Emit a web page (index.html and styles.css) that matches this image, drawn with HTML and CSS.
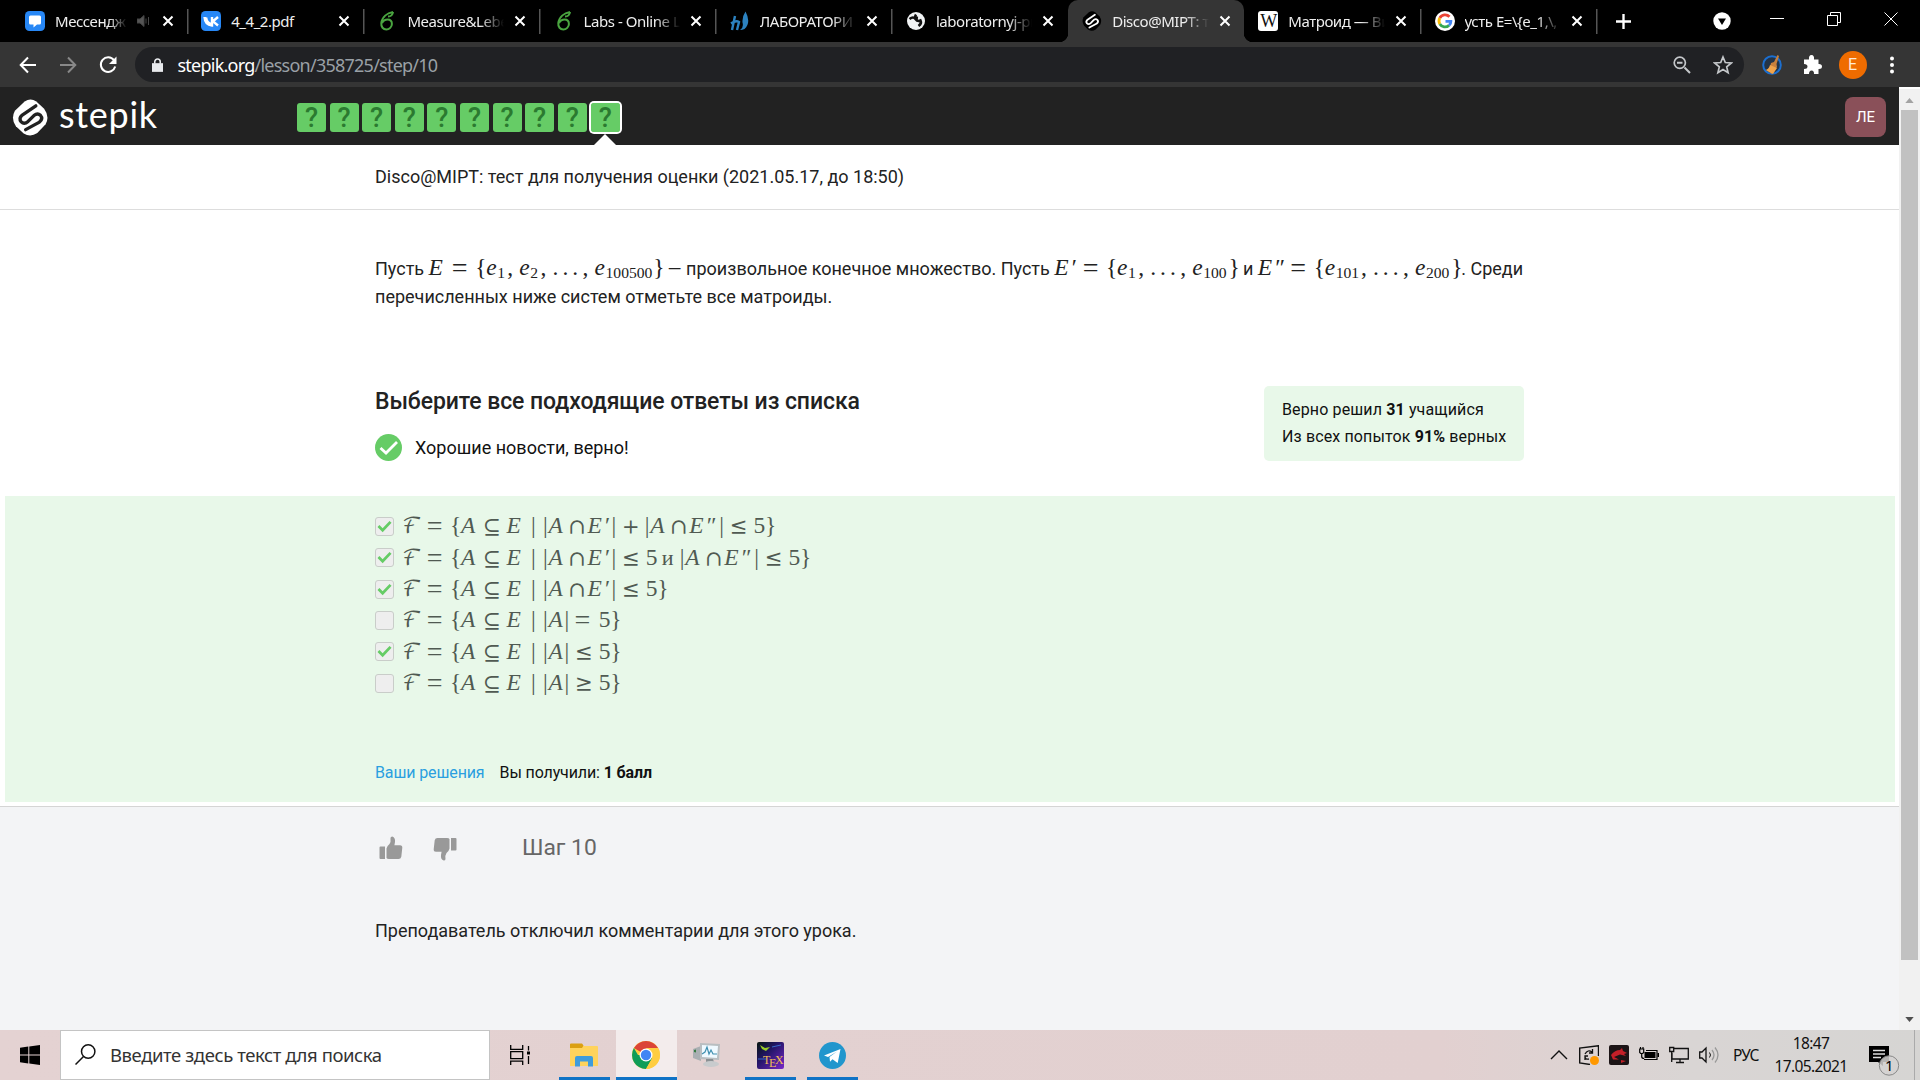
FILE: index.html
```html
<!DOCTYPE html>
<html lang="ru">
<head>
<meta charset="utf-8">
<title>Disco@MIPT</title>
<link rel="stylesheet" href="styles.css">
</head>
<body>
<svg class="defs" width="0" height="0">
  <defs>
    <symbol id="close" viewBox="0 0 12 12"><path d="M1.5 1.5l9 9M10.500 1.500l-9 9" stroke="#fff" stroke-width="2" fill="none"/></symbol>
    <symbol id="leaf" viewBox="0 0 16 20"><path d="M14 1C8 2 3 6 2.300 12c-.4 4 2 6.500 5 6.500s5.600-2.500 5.600-5.500c0-2.700-1.800-4.500-4.300-4.500C6 8.500 4 10 3 12M14 1c-.3 2.500-2 4.500-5 4.500" stroke="#4aa540" stroke-width="2" fill="none"/></symbol>
    <symbol id="hex" viewBox="0 0 38 38"><path d="M13 2.500Q19-1.500 25 2.500L33 10Q39 18 34.500 26L26 35Q19 39.500 12 35.500L4 28Q-1.500 20 3 12z"/></symbol>
    <symbol id="ess" viewBox="0 0 38 38"><path d="M24.500 7L10.500 16.500q-4 3.500-1 7 3 3 7-.5l6-6q3.700-3.200 6.700-.3 3 3.500-1 7L14 31.500" fill="none" stroke-width="3.400" stroke-linecap="round" stroke-linejoin="round"/></symbol>
    <symbol id="thumb" viewBox="0 0 24 24"><path d="M.5 11.500q0-1 1-1H6v12.500H1.500q-1 0-1-1zM7.500 12.500Q8 10 10.500 8 12 6 11.500 2q0-1.500 1.800-1.500Q16.500 1.500 16 6l-.6 3.200H21q2.500 0 2.300 2.500l-1 9Q21.800 23 19.500 23H10q-2 0-2.500-1z" fill="#999"/></symbol>
    <symbol id="tick" viewBox="0 0 16 14"><path d="M1.500 6.500l4.500 4.500L14.500 2" stroke="#66cc66" stroke-width="3" fill="none"/></symbol>
  </defs>
</svg>

<header class="tabs">
  <div class="tab"><svg class="fav" viewBox="0 0 20 20"><rect width="20" height="20" rx="4.500" fill="#2787f5"/><path d="M5.500 4.500h9q1.500 0 1.500 1.500v6q0 1.500-1.500 1.500H12l-3.500 3v-3h-3Q4 13.500 4 12V6q0-1.500 1.500-1.500z" fill="#fff"/></svg><span class="tab-title short">Мессендж</span><svg class="snd" viewBox="0 0 12 12"><path d="M0 4h3l4-3.500v11L3 8H0zM9 3.500v5M11.500 2v8" fill="#555" stroke="#444"/></svg><svg class="x"><use href="#close"/></svg></div>
  <div class="tab sep"><svg class="fav" viewBox="0 0 20 20"><rect width="20" height="20" rx="4.500" fill="#2787f5"/><path d="M3.500 6q.5 8 7.500 8.500V6M5 6.500q1 6 6 7M17 6l-5 4.300 5 4.200" fill="none" stroke="#fff" stroke-width="2.400"/></svg><span class="tab-title plain">4_4_2.pdf</span><svg class="x"><use href="#close"/></svg></div>
  <div class="tab sep"><svg class="fav narrow"><use href="#leaf"/></svg><span class="tab-title">Measure&amp;Lebe</span><svg class="x"><use href="#close"/></svg></div>
  <div class="tab sep"><svg class="fav narrow"><use href="#leaf"/></svg><span class="tab-title">Labs - Online L</span><svg class="x"><use href="#close"/></svg></div>
  <div class="tab sep"><svg class="fav" viewBox="0 0 20 20"><path d="M5 5L2 19M1 12.500q5-3.500 8-1.500l-2 8" stroke="#2c82c0" stroke-width="2.400" fill="none"/><path d="M15.500.5q6 11-1 17.500-2 1-4.500 1 4-2.500 2.500-7.500-.5-6 3-11z" fill="#2c82c0"/></svg><span class="tab-title">ЛАБОРАТОРИ</span><svg class="x"><use href="#close"/></svg></div>
  <div class="tab sep"><svg class="fav" viewBox="0 0 20 20"><circle cx="10" cy="10" r="9" fill="#f1f3f4"/><path d="M3.500 8q4-3 6 0t5 1.500q1.500 3-2 5.500M10 3.500q-2 3 2 3.500" stroke="#111" stroke-width="2.600" fill="none"/></svg><span class="tab-title">laboratornyj-pr</span><svg class="x"><use href="#close"/></svg></div>
  <div class="tab active"><svg class="fav" viewBox="0 0 38 38"><use href="#hex" fill="#000"/><use href="#ess" stroke="#fff"/></svg><span class="tab-title">Disco@MIPT: т</span><svg class="x"><use href="#close"/></svg></div>
  <div class="tab"><span class="fav wiki">W</span><span class="tab-title">Матроид — Ви</span><svg class="x"><use href="#close"/></svg></div>
  <div class="tab sep"><svg class="fav" viewBox="0 0 20 20"><circle cx="10" cy="10" r="10" fill="#fff"/><g fill="none" stroke-width="2.800"><path d="M4.800 7A6 6 0 0 1 14.500 5.800" stroke="#ea4335"/><path d="M4.800 13a6.200 6.200 0 0 1 0-6" stroke="#fbbc05"/><path d="M4.800 13a6 6 0 0 0 9.200 1.400" stroke="#34a853"/><path d="M14 14.400q2-1.800 1.900-4H10.500" stroke="#4285f4"/></g></svg><span class="tab-title">усть E=\{e_1,\,</span><svg class="x"><use href="#close"/></svg></div>
  <div class="newtab"><svg viewBox="0 0 14 14" width="15" height="15"><path d="M7 0v14M0 7h14" stroke="#fff" stroke-width="2.200"/></svg></div>
  <div class="winbtns">
    <svg viewBox="0 0 18 18" width="18" height="18"><circle cx="9" cy="9" r="8.700" fill="#fff"/><path d="M5 6.500h8L9 13z" fill="#000"/></svg>
    <svg viewBox="0 0 14 14" width="14" height="14"><path d="M0 6.500h14" stroke="#fff"/></svg>
    <svg viewBox="0 0 14 14" width="14" height="14"><path d="M.5 3.500h10v10H.5zM3.500 3.500v-3h10v10h-3" stroke="#fff" fill="none"/></svg>
    <svg viewBox="0 0 14 14" width="14" height="14"><path d="M.5.500l13 13M13.500.500l-13 13" stroke="#fff"/></svg>
  </div>
</header>

<nav class="toolbar">
  <svg class="nav-ic" viewBox="0 0 18 18"><path d="M17 9H2M9 1.500L1.700 9 9 16.500" stroke="#fff" stroke-width="2" fill="none"/></svg>
  <svg class="nav-ic" viewBox="0 0 18 18"><path d="M1 9h15M9 1.500L16.300 9 9 16.500" stroke="#888" stroke-width="2" fill="none"/></svg>
  <svg class="nav-ic" viewBox="0 0 18 18"><path d="M15 4.200A7.300 7.300 0 1 0 16.200 10.500" stroke="#fff" stroke-width="2" fill="none"/><path d="M17.500.5v7.500H10z" fill="#fff"/></svg>
  <div class="omnibox">
    <svg viewBox="0 0 12 15" width="11" height="14"><path d="M0 5.500h12V15H0z" fill="#e8eaed"/><path d="M3 6V4a3 3 0 0 1 6 0v2" stroke="#e8eaed" stroke-width="1.700" fill="none"/></svg>
    <span class="url"><b>stepik.org</b>/lesson/358725/step/10</span>
    <svg viewBox="0 0 18 18" width="18" height="18"><path d="M11.500 11.500L17 17M4 6.700h5.500" stroke="#c4c7ca" stroke-width="2"/><circle cx="6.800" cy="6.800" r="5.600" stroke="#c4c7ca" stroke-width="1.700" fill="none"/></svg>
    <svg viewBox="0 0 20 20" width="20" height="20"><path d="M10 2l2.300 5.500 6 .5-4.600 3.900 1.400 5.900L10 14.600l-5.100 3.200 1.400-5.900L1.700 8l6-.5z" stroke="#c4c7ca" stroke-width="1.700" fill="none"/></svg>
  </div>
  <div class="ext">
    <svg viewBox="0 0 20 20" width="20" height="20"><circle cx="10" cy="10" r="8.800" stroke="#1c6fd0" stroke-width="2" fill="#243447"/><path d="M15.500 0l1.500 1-2.500 8 .5 3-5 7-6-4q4-1 5-7l3-1z" fill="#c8803c"/><path d="M8 10l7 3-4 6-7-4q3-1 4-5z" fill="#f0a44c"/></svg>
    <svg viewBox="0 0 19 19" width="19" height="19"><path d="M1 4.500h5Q5.500 0 8.500 0T11 4.500h4.500V9Q19 8.800 19 11.500T15.500 14v5H11q.2-3.500-2.400-3.500T6 19H1v-5q3.500 0 3.500-2.500T1 9z" fill="#fff"/></svg>
    <span class="profile">E</span>
    <svg viewBox="0 0 4 18" width="4" height="18"><g fill="#fff"><circle cx="2" cy="2.500" r="2"/><circle cx="2" cy="9" r="2"/><circle cx="2" cy="15.500" r="2"/></g></svg>
  </div>
</nav>

<div class="viewport">
<main class="page">
  <header class="top">
    <svg class="logo" viewBox="0 0 38 38"><use href="#hex" fill="#fff"/><use href="#ess" stroke="#222"/></svg>
    <span class="brand">stepik</span>
    <div class="steps">
      <span>?</span><span>?</span><span>?</span><span>?</span><span>?</span><span>?</span><span>?</span><span>?</span><span>?</span><span class="current">?</span>
    </div>
    <span class="user">ЛЕ</span>
  </header>
  <div class="lesson">Disco@MIPT: тест для получения оценки (2021.05.17, до 18:50)</div>

  <section class="question">
    <p>Пусть <span class="m"><i class="E">E</i><b class="eq">=</b><b class="br">{</b><i class="e">e</i><sub class="s1">1</sub><b class="cm">,</b><i class="e">e</i><sub class="s1">2</sub><b class="cm">,</b><b class="dots">...</b><b class="cm">,</b><i class="e">e</i><sub class="s6">100500</sub><b class="end">}</b></span> — произвольное конечное множество. Пусть <span class="m"><i class="Ep">E</i><b class="pr">′</b><b class="eq">=</b><b class="br">{</b><i class="e">e</i><sub class="s1">1</sub><b class="cm">,</b><b class="dots">...</b><b class="cm">,</b><i class="e">e</i><sub class="s3">100</sub><b class="end">}</b></span> и <span class="m"><i class="Ep">E</i><b class="pr2">″</b><b class="eq">=</b><b class="br">{</b><i class="e">e</i><sub class="s3">101</sub><b class="cm">,</b><b class="dots">...</b><b class="cm">,</b><i class="e">e</i><sub class="s3">200</sub><b class="end">}</b></span>. Среди<br>перечисленных ниже систем отметьте все матроиды.</p>
  </section>

  <section class="quiz-head">
    <div>
      <h2>Выберите все подходящие ответы из списка</h2>
      <div class="verdict"><svg viewBox="0 0 27 27" width="27" height="27"><circle cx="13.500" cy="13.500" r="13.500" fill="#66cc66"/><path d="M5.500 14l5.500 5L22 8" stroke="#fff" stroke-width="2.800" fill="none"/></svg><span>Хорошие новости, верно!</span></div>
    </div>
    <div class="stats"><div>Верно решил <b>31</b> учащийся</div><div>Из всех попыток <b>91%</b> верных</div></div>
  </section>

  <section class="answers">
    <div class="opt"><span class="box"><svg><use href="#tick"/></svg></span><span class="m"><b class="F">ℱ</b><b class="eq">=</b><b class="br">{</b><i class="A1">A</i><b class="op sub">⊆</b><i class="E">E</i><b class="bar mid">|</b><b class="bar">|</b><i class="A">A</i><b class="op cap">∩</b><i class="Ep">E</i><b class="p1">′</b><b class="bar r">|</b><b class="op plus">+</b><b class="bar">|</b><i class="A">A</i><b class="op cap">∩</b><i class="Ep">E</i><b class="p2">″</b><b class="bar r">|</b><b class="op rel">≤</b><b class="n">5</b><b class="end">}</b></span></div>
    <div class="opt"><span class="box"><svg><use href="#tick"/></svg></span><span class="m"><b class="F">ℱ</b><b class="eq">=</b><b class="br">{</b><i class="A1">A</i><b class="op sub">⊆</b><i class="E">E</i><b class="bar mid">|</b><b class="bar">|</b><i class="A">A</i><b class="op cap">∩</b><i class="Ep">E</i><b class="p1">′</b><b class="bar r">|</b><b class="op rel">≤</b><b class="n and">5</b><b class="i">и</b><b class="bar">|</b><i class="A">A</i><b class="op cap">∩</b><i class="Ep">E</i><b class="p2">″</b><b class="bar r">|</b><b class="op rel">≤</b><b class="n">5</b><b class="end">}</b></span></div>
    <div class="opt"><span class="box"><svg><use href="#tick"/></svg></span><span class="m"><b class="F">ℱ</b><b class="eq">=</b><b class="br">{</b><i class="A1">A</i><b class="op sub">⊆</b><i class="E">E</i><b class="bar mid">|</b><b class="bar">|</b><i class="A">A</i><b class="op cap">∩</b><i class="Ep">E</i><b class="p1">′</b><b class="bar r">|</b><b class="op rel">≤</b><b class="n">5</b><b class="end">}</b></span></div>
    <div class="opt"><span class="box"></span><span class="m"><b class="F">ℱ</b><b class="eq">=</b><b class="br">{</b><i class="A1">A</i><b class="op sub">⊆</b><i class="E">E</i><b class="bar mid">|</b><b class="bar">|</b><i class="Al">A</i><b class="bar r">|</b><b class="eq">=</b><b class="n">5</b><b class="end">}</b></span></div>
    <div class="opt"><span class="box"><svg><use href="#tick"/></svg></span><span class="m"><b class="F">ℱ</b><b class="eq">=</b><b class="br">{</b><i class="A1">A</i><b class="op sub">⊆</b><i class="E">E</i><b class="bar mid">|</b><b class="bar">|</b><i class="Al">A</i><b class="bar r">|</b><b class="op rel">≤</b><b class="n">5</b><b class="end">}</b></span></div>
    <div class="opt"><span class="box"></span><span class="m"><b class="F">ℱ</b><b class="eq">=</b><b class="br">{</b><i class="A1">A</i><b class="op sub">⊆</b><i class="E">E</i><b class="bar mid">|</b><b class="bar">|</b><i class="Al">A</i><b class="bar r">|</b><b class="op rel">≥</b><b class="n">5</b><b class="end">}</b></span></div>
    <div class="score"><a>Ваши решения</a><span>Вы получили: <b>1 балл</b></span></div>
  </section>

  <footer class="foot">
    <div class="vote"><svg><use href="#thumb"/></svg><svg class="down"><use href="#thumb"/></svg><span>Шаг 10</span></div>
    <p>Преподаватель отключил комментарии для этого урока.</p>
  </footer>
</main>
<aside class="scroll">
  <svg viewBox="0 0 10 6" width="9" height="5"><path d="M0 6l5-6 5 6z" fill="#a3a3a3"/></svg>
  <div class="thumb"></div>
  <svg viewBox="0 0 10 6" width="9" height="5"><path d="M0 0l5 6 5-6z" fill="#505050"/></svg>
</aside>
</div>

<div class="taskbar">
  <div class="start"><svg viewBox="0 0 20 20" width="20" height="20"><path d="M0 2.700L8.300 1.600V9.500H0zM9.300 1.400L20 0v9.500H9.300zM0 10.500h8.300v7.900L0 17.300zM9.300 10.500H20V20L9.300 18.600z"/></svg></div>
  <div class="search"><svg viewBox="0 0 21 21" width="21" height="21"><circle cx="13.200" cy="7.500" r="6.700" stroke="#111" stroke-width="1.500" fill="none"/><path d="M8.500 12.500L.5 20.500" stroke="#111" stroke-width="1.500"/></svg><span>Введите здесь текст для поиска</span></div>
  <div class="app tv"><svg viewBox="0 0 20 20" width="20" height="20"><path d="M.7 0v4.300h12V0M.7 6.700h12v7H.7zM.7 20v-3.800h12V20M18.500 1v4.500M18.500 11v8" stroke="#000" stroke-width="1.300" fill="none"/><path d="M17 6.500h3v3h-3z"/></svg></div>
  <div class="app run"><svg viewBox="0 0 28 24" width="28" height="24"><path d="M0 1h12l1 2h14q1 0 1 1v19H0z" fill="#ffd35c"/><path d="M0 1.500Q0 .5 1 .5h11l1.500 2L12 5H0z" fill="#dba012"/><path d="M5 23.500V15q0-2 2-2h14q2 0 2 2v8.500h-5v-5h-8v5z" fill="#3f9cdc"/></svg></div>
  <div class="app focus"><svg viewBox="0 0 28 28" width="28" height="28"><circle cx="14" cy="14" r="14" fill="#ffcd40"/><path d="M14 14L1.900 7A14 14 0 0 1 26.100 7z" fill="#db4437"/><path d="M1.900 7a14 14 0 0 0 12.100 21l6-10.500L14 14H6z" fill="#0f9d58"/><path d="M14 7h12.100A14 14 0 0 1 14 28l6-10.500z" fill="#ffcd40"/><circle cx="14" cy="14" r="6.500" fill="#fff"/><circle cx="14" cy="14" r="5.200" fill="#4285f4"/></svg></div>
  <div class="app"><svg viewBox="0 0 28 26" width="28" height="26"><path d="M0 7l8-3v15l-8-3z" fill="#a9afb2"/><path d="M1 8l2-.5v3L1 10z" fill="#367b42"/><path d="M7 1l20 1-1 16-19-1z" fill="#b9bec1"/><path d="M9 3l16 1-1 12-15-1z" fill="#eff9ff"/><path d="M9 12l3-2 2-5 2 7 2-4 2 4h4" stroke="#3f8fb0" stroke-width="1.200" fill="none"/><path d="M13 17h7l1 3H13z" fill="#8a9093"/><ellipse cx="18" cy="22" rx="8" ry="3" fill="#c8cbcd"/></svg></div>
  <div class="app run"><svg viewBox="0 0 27 27" width="27" height="27"><defs><linearGradient id="tex" x2="1" y2="1"><stop stop-color="#06150d"/><stop offset=".4" stop-color="#221566"/><stop offset="1" stop-color="#7829c9"/></linearGradient></defs><rect width="27" height="27" rx="2" fill="url(#tex)"/><path d="M3 3l5 3 5-1-4 4-4-2z" fill="#9cce29"/><path d="M15 5l9-2M1 17h8" stroke="#3869c9"/><g font-family="Liberation Serif" font-size="12" fill="#f0bd58"><text x="6" y="22">T</text><text x="12" y="25">E</text><text x="18" y="22">X</text></g></svg></div>
  <div class="app run"><svg viewBox="0 0 27 27" width="27" height="27"><circle cx="13.500" cy="13.500" r="13.500" fill="#2196cd"/><path d="M5 13.500L21.500 7l-2.800 14-5.200-3.800-2.500 2.500-.5-4.700L18 9.500 9 15z" fill="#fff"/></svg></div>
  <div class="tray">
    <svg viewBox="0 0 20 20"><path d="M2 14l8-8 8 8" stroke="#111" stroke-width="1.400" fill="none"/></svg>
    <svg viewBox="0 0 20 20"><path d="M11 19.500L.7 18V3L19.500.7V11" stroke="#111" stroke-width="1.400" fill="none"/><path d="M6 9q3-5 7-2M13.500 4v4H10M10 14q-4 1-4-3M6 15v-4h3" stroke="#111" fill="none" stroke-width="1.300"/><circle cx="15.500" cy="15.500" r="4.500" fill="#ff9800"/></svg>
    <svg viewBox="0 0 20 20"><rect width="20" height="20" rx="2" fill="#1c1416"/><path d="M2 10q4-5 9-5l2-2 1 3 4 2-3 1 2 2-6-1.500-6 2.500 5 2.500h-6zM12 15l5 1-5 2z" fill="#c41f28"/></svg>
    <svg viewBox="0 0 20 20"><path d="M7 5.500h11v9H5" stroke="#000" fill="none" stroke-width="1.200"/><path d="M5.500 7h11v6h-11zM18.500 8h1.500v4h-1.500z"/><path d="M.7 4h4v3.500l-1 1H1.700l-1-1zM1.500 2v2M4 2v2M2.700 8.500v3q0 2 2.500 2" stroke="#000" fill="none" stroke-width="1.200"/></svg>
    <svg viewBox="0 0 20 20"><path d="M5 3.500h14.300V14H3V8M11 14v3.500M7 17.500h8M.7 2.500h4v4h-4zM2.700 6.500V17" stroke="#111" fill="none" stroke-width="1.300"/></svg>
    <svg viewBox="0 0 20 20"><path d="M.7 7H3l4-4v14l-4-4H.7z" stroke="#111" stroke-width="1.300" fill="none"/><path d="M10.500 7.500q2 2.500 0 5" stroke="#111" fill="none"/><path d="M13 5q4 5 0 10M16 2.500q6 7.500 0 15" stroke="#999" fill="none" stroke-width="1.300"/></svg>
    <span class="lang">РУС</span>
    <span class="clock">18:47<br>17.05.2021</span>
    <svg class="note" viewBox="0 0 32 32"><path d="M0 1h20v16h-6v4l-5-4H0z"/><path d="M4 5.500h12M4 9h12M4 12.500h8" stroke="#ddd" stroke-width="1.300"/><circle cx="20" cy="20.500" r="9.700" fill="#d5d2d1" fill-opacity=".85" stroke="#888"/><text x="16" y="26" font-family="Noto Sans" font-size="15">1</text></svg>
  </div>
</div>
</body>
</html>
```
FILE: styles.css
```css
* { box-sizing: border-box; }
body { margin: 0; width: 1920px; height: 1080px; overflow: hidden; display: flex; flex-direction: column; font-family: Roboto, sans-serif; color: #222; background: #fff; }
svg { display: block; flex: none; }
.defs { position: absolute; }
p, h2 { margin: 0; }

/* browser tabs */
.tabs { height: 42px; flex: none; background: #000; display: flex; padding-left: 10.500px; font-family: "Noto Sans", sans-serif; }
.tab { width: 176.200px; flex: none; height: 42px; display: flex; align-items: center; padding-left: 14.500px; position: relative; color: #eee; }
.tab.sep { background: linear-gradient(#555, #555) 0 50% / 1.500px 25px no-repeat; }
.tab.active { background: #353535; border-radius: 10px 10px 0 0; }
.tab.active::before, .tab.active::after { content: ""; position: absolute; bottom: 0; width: 9px; height: 9px; }
.tab.active::before { left: -9px; background: radial-gradient(circle at 0 0, #000 9px, #353535 9.500px); }
.tab.active::after { right: -9px; background: radial-gradient(circle at 100% 0, #000 9px, #353535 9.500px); }
.fav { width: 20px; height: 20px; margin-right: 10px; flex: none; }
.fav.narrow { width: 16px; margin: 0 12px 0 2px; }
.wiki { background: #fff; color: #111; border-radius: 3px; font: 18px/20px "Liberation Serif", serif; letter-spacing: -1px; text-align: center; }
.tab-title { width: 96.500px; white-space: nowrap; font-size: 15px; letter-spacing: -.45px; mask-image: linear-gradient(90deg, #000 75%, transparent); }
.tab-title.plain { mask-image: none; }
.tab-title.short { width: 72px; }
.snd { width: 12px; height: 12px; margin: 0 2.500px 0 10px; }
.x { width: 12px; height: 12px; margin-left: 10px; }
.newtab { display: flex; align-items: center; width: 60px; padding-left: 20px; background: linear-gradient(#555, #555) 0 50% / 1.500px 25px no-repeat; }
.winbtns { display: flex; align-items: center; margin-left: auto; padding: 0 22px 5px 0; gap: 43px; }
.winbtns svg:first-child { position: relative; top: 2px; margin-right: -4px; }

/* address bar */
.toolbar { height: 45px; flex: none; background: #353535; display: flex; align-items: center; padding-left: 18.500px; }
.nav-ic { width: 18px; height: 18px; margin-right: 22px; }
.nav-ic + .nav-ic + .nav-ic { margin-right: 18px; }
.omnibox { width: 1609px; height: 35px; border-radius: 18px; background: #202124; display: flex; align-items: center; padding: 0 11px 0 17px; gap: 22px; }
.url { flex: 1; margin-left: -7px; font: 18px "Noto Sans", sans-serif; letter-spacing: -.76px; color: #9aa0a6; }
.url b { font-weight: 400; color: #fff; }
.ext { display: flex; align-items: center; gap: 17px; margin-left: 18px; }
.ext svg:first-child { margin-right: 4px; }
.profile { width: 28px; height: 28px; margin: 0 6px 0 0; border-radius: 50%; background: #ef6c00; color: #ffe9d6; font: 16px/28px Roboto, sans-serif; text-align: center; }

/* page frame */
.viewport { height: 943px; display: flex; flex: none; }
.page { width: 1899px; display: flex; flex-direction: column; }
.scroll { width: 21px; margin-top: 2px; background: #f1f1f1; display: flex; flex-direction: column; align-items: center; justify-content: space-between; padding: 9px 0 8px; }
.thumb { width: 17px; height: 850px; background: #c1c1c1; margin: 7px 0 auto; }

.top { height: 58px; flex: none; background: #222; display: flex; align-items: center; padding: 4px 13px 0 12px; }
.logo { width: 37px; height: 37px; margin: -1px 0 0; }
.brand { font: 36px/48px Lato, sans-serif; letter-spacing: .7px; color: #fff; margin: -8px 0 0 10px; width: 138px; }
.steps { display: flex; gap: 3.600px; margin: -1px 0 0 100px; }
.steps span { width: 29px; height: 29px; border-radius: 3px; background: #66cc66; color: #2b7a30; font: 500 27px/30px Roboto, sans-serif; text-align: center; }
.steps .current { position: relative; box-shadow: inset 0 0 0 1px #66cc66, 0 0 0 2px #fff; margin-left: .5px; }
.steps .current::after { content: ""; position: absolute; left: 3.500px; top: 31px; border: 11px solid transparent; border-top: 0; border-bottom-color: #fff; }
.user { margin-left: auto; width: 41px; height: 40px; margin-top: -2px; border-radius: 8px; background: #8a5059; color: #fff; font: 15px/41px Roboto, sans-serif; text-align: center; }

.lesson { height: 65px; flex: none; padding-left: 375px; border-bottom: 1px solid #ddd; font-size: 18px; line-height: 63px; }

.question { height: 176px; flex: none; padding: 45px 0 0 375px; font-size: 18px; line-height: 28px; white-space: nowrap; }

/* formula atoms: every glyph has the advance width its class gives */
.m { display: inline-block; font: 23.500px/22px "Liberation Serif", serif; letter-spacing: 0; white-space: nowrap; }
.m b, .m i, .m sub { display: inline-block; font-weight: 400; white-space: nowrap; }
.m .E { width: 24.300px; }
.m .Ep { width: 17.500px; }
.m .e { width: 11px; }
.m .eq { width: 23.300px; font-size: 28px; line-height: 22px; vertical-align: -2px; text-indent: -1px; }
.m .br { width: 10px; text-indent: -1px; }
.m .cm { width: 12px; }
.m .dots { width: 30px; letter-spacing: 4px; }
.m sub { font-size: 15.600px; line-height: 15px; vertical-align: -3px; }
.m .s1 { width: 10.200px; }
.m .s3 { width: 25.300px; }
.m .s6 { width: 47.600px; }
.m .end { width: 10px; }
.m .pr { width: 12px; }
.m .pr2 { width: 16px; }
.m .F { width: 24.700px; font-family: "DejaVu Math TeX Gyre", "DejaVu Sans", serif; font-size: 21.500px; text-indent: -1px; }
.m .A1 { width: 22.300px; }
.m .A { width: 20px; }
.m .Al { width: 16px; }
.m .op { font-family: "DejaVu Math TeX Gyre", "DejaVu Sans", serif; font-size: 21px; }
.m .sub { width: 23.300px; }
.m .cap { width: 19px; }
.m .plus { width: 22.300px; }
.m .rel { width: 23.300px; }
.m .n { width: 11.500px; }
.m .and { width: 16px; }
.m .i { width: 18px; font-size: 22px; }
.m .bar { width: 5.500px; }
.m .mid { width: 12px; }
.m .r { width: 11px; }
.m .p1 { width: 6.500px; }
.m .p2 { width: 12.500px; }

.quiz-head { height: 110px; flex: none; padding-left: 375px; display: flex; justify-content: space-between; width: 1524px; }
.quiz-head h2 { font-weight: 500; font-size: 23px; line-height: 30px; letter-spacing: -.09px; padding-top: 1px; white-space: nowrap; }
.verdict { display: flex; align-items: center; gap: 13px; margin-top: 17px; font-size: 18px; color: #111; }
.stats { width: 260px; height: 75px; background: #e8f8e9; border-radius: 5px; padding: 10px 0 0 18px; font-size: 16px; line-height: 27px; letter-spacing: .13px; color: #111; white-space: nowrap; }
.stats b, .score b { font-weight: 700; }

.answers { height: 306px; flex: none; margin: 0 4px 0 5px; background: #e8f8e9; padding: 14.600px 0 0 370px; }
.opt { height: 31.400px; display: flex; align-items: center; gap: 9px; color: #505a52; }
.box { width: 19px; height: 19px; border: 1.500px solid #c9cdc9; border-radius: 3px; background: #eee; display: flex; align-items: center; justify-content: center; flex: none; }
.box svg { width: 15px; height: 13px; }
.score { display: flex; gap: 15px; margin-top: 59.400px; font-size: 16px; line-height: 30px; letter-spacing: -.12px; color: #111; white-space: nowrap; }
.score a { color: #2a9fe0; }

.foot { flex: 1; margin-top: 4px; border-top: 1px solid #d5d5d5; background: #f3f4f6; padding: 24px 0 0 378px; }
.vote { display: flex; align-items: center; height: 34px; }
.vote svg { width: 24px; height: 24px; margin: -1px 30px 0 1px; }
.vote .down { transform: rotate(180deg); margin: 2px 65px 0 0; }
.vote span { font-size: 22.800px; color: #666; margin-top: -2px; }
.foot p { margin: 54px 0 0 -3px; font-size: 18px; line-height: 24px; letter-spacing: -.02px; }

/* taskbar */
.taskbar { height: 50px; flex: none; display: flex; background: linear-gradient(90deg, #e4d2d2 0, #e2d0d0 75%, #d9d5d4 88%, #d6d5d3); font-family: "Noto Sans", sans-serif; }
.start { width: 60px; display: flex; align-items: center; justify-content: center; }
.search { width: 430px; background: #fff; border: 1px solid #c4c4c4; display: flex; align-items: center; padding: 0 0 2px 14px; gap: 14px; font-size: 18.500px; color: #333; letter-spacing: -.42px; white-space: nowrap; }
.app { width: 51px; display: flex; align-items: center; justify-content: center; margin-right: 12px; }
.app.tv { width: 60px; margin-right: 8.500px; }
.app.run { border-bottom: 3px solid #0f73c6; padding-top: 3px; margin-right: 6px; }
.app.focus { width: 61px; background: #f3ecec; border-bottom: 3px solid #0f73c6; padding-top: 3px; margin-right: 5px; }
.app.run + .app.run { margin-left: 5px; }
.tray { margin-left: auto; display: flex; align-items: center; gap: 10px; margin-right: 5px; border-right: 1px solid #aaa; padding-right: 6px; color: #111; }
.tray svg { width: 20px; height: 20px; }
.tray .note { width: 32px; height: 32px; margin: 12px 7px 0 0; }
.lang { font-size: 15.500px; margin-left: 4px; width: 26px; letter-spacing: -.7px; }
.clock { font-size: 15.500px; line-height: 23px; letter-spacing: -.6px; text-align: center; width: 86px; margin: 0 5px 0 -1px; }
```
